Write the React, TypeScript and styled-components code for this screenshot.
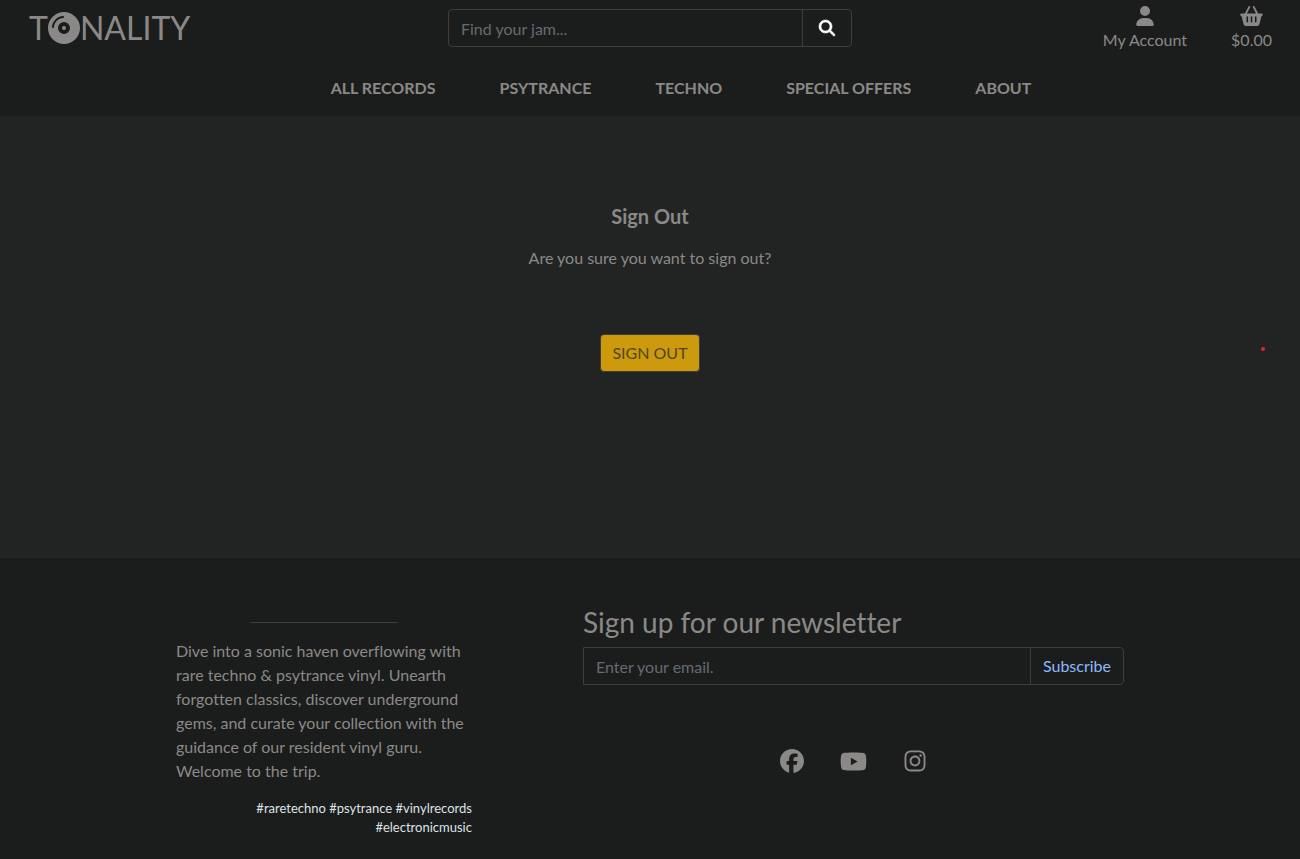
import React from "react";
import styled, { createGlobalStyle } from "styled-components";
import {
  FaCompactDisc,
  FaFacebook,
  FaInstagram,
  FaMagnifyingGlass,
  FaUser,
  FaYoutube,
} from "react-icons/fa6";

const color = {
  bar: "#1b1d1c",
  page: "#222423",
  text: "#8b8987",
  muted: "#656b71",
  line: "#3b3e3d",
  accent: "#cc9a0c",
};

const GlobalStyle = createGlobalStyle`
  *, *::before, *::after { box-sizing: border-box; }
  html, body, #root { height: 100%; }
  body {
    margin: 0;
    background: ${color.bar};
    color: ${color.text};
    font: 400 16px/24px Lato, sans-serif;
    font-variant-ligatures: none;
  }
  h1, h2, p, ul { margin: 0; padding: 0; font-weight: 400; }
  a { color: inherit; text-decoration: none; }
  svg { display: block; overflow: visible; }
`;

const Page = styled.div`
  display: flex;
  flex-direction: column;
  min-height: 100%;
`;

const Header = styled.header`
  background: ${color.bar};
`;

const TopRow = styled.div`
  display: grid;
  grid-template-columns: repeat(3, minmax(0, 1fr));
  gap: 24px;
  padding: 4px 20px 0;
`;

const Logo = styled.a`
  display: flex;
  align-items: center;
  justify-self: start;
  height: 48px;
  padding-left: 9px;
  font-size: 32px;
  line-height: 48px;
`;

const InputGroup = styled.form<{ $square?: boolean }>`
  display: flex;
  height: 38px;
  border: 1px solid ${color.line};
  border-radius: ${(p) => (p.$square ? "0 4px 4px 0" : "4px")};
`;

const SearchGroup = styled(InputGroup)`
  margin-top: 5px;
`;

const TextInput = styled.input`
  flex: 1;
  min-width: 0;
  padding: 2px 12px 0;
  border: 0;
  background: transparent;
  color: ${color.text};
  font: inherit;
  &::placeholder { color: ${color.muted}; opacity: 1; }
`;

const GroupButton = styled.button<{ $tone: string; $pad: number }>`
  display: flex;
  align-items: center;
  padding: 0 ${(p) => p.$pad}px;
  border: 0;
  border-left: 1px solid ${color.line};
  background: transparent;
  color: ${(p) => p.$tone};
  font: inherit;
`;

const UserLinks = styled.ul`
  display: flex;
  justify-content: flex-end;
  gap: 44px;
  padding-right: 8px;
  list-style: none;
`;

const UserLink = styled.a`
  display: flex;
  flex-direction: column;
  align-items: center;
  gap: 2px;
  padding-top: 2px;
`;

const Nav = styled.nav`
  padding: 24px 0 16px 62px;
`;

const NavList = styled.ul`
  display: flex;
  justify-content: center;
  gap: 64px;
  list-style: none;
`;

const NavLink = styled.a`
  font-weight: 700;
  text-transform: uppercase;
`;

const Main = styled.main`
  position: relative;
  display: flex;
  flex-direction: column;
  align-items: center;
  padding: 88px 24px 186px;
  background: ${color.page};
`;

const Title = styled.h1`
  margin-bottom: 18px;
  font-size: 20px;
  font-weight: 700;
  line-height: 24px;
`;

const SignOutButton = styled.button`
  height: 38px;
  margin-top: 64px;
  padding: 0 11px;
  border: 1px solid ${color.line};
  border-radius: 4px;
  background: ${color.accent};
  color: #50461c;
  font: inherit;
  text-transform: uppercase;
`;

const Marker = styled.span`
  position: absolute;
  top: 231px;
  right: 35px;
  width: 4px;
  height: 4px;
  border-radius: 50%;
  background: #e02420;
`;

const Footer = styled.footer`
  flex: 1;
  padding: 40px 24px 22px;
  background: ${color.bar};
`;

const FooterGrid = styled.div`
  display: grid;
  grid-template-columns: minmax(0, 35fr) minmax(0, 64fr);
  gap: 111px;
  max-width: 948px;
  margin: 0 auto;
`;

const Rule = styled.hr`
  width: 50%;
  margin: 24px auto 16px;
  border: 0;
  border-top: 1px solid ${color.line};
`;

const Tags = styled.p`
  margin-top: 16px;
  color: #dee2e6;
  font-size: 13px;
  line-height: 19px;
  text-align: right;
`;

const NewsTitle = styled.h2`
  padding: 8px 0;
  font-size: 28px;
  line-height: 33px;
`;

const Socials = styled.ul`
  display: flex;
  justify-content: center;
  align-items: center;
  gap: 36px;
  height: 24px;
  margin-top: 64px;
  list-style: none;
`;

const navItems = ["All records", "Psytrance", "Techno", "Special offers", "About"];

const socials = [
  { name: "Facebook", Icon: FaFacebook, size: 24 },
  { name: "YouTube", Icon: FaYoutube, size: 27 },
  { name: "Instagram", Icon: FaInstagram, size: 24 },
];

const stay = (e: React.FormEvent) => e.preventDefault();

function BasketIcon() {
  return (
    <svg width="23" height="20" viewBox="0 0 576 512" fill="currentColor" aria-hidden="true">
      <path
        fillRule="evenodd"
        d="M253 35c6-12 2-26-10-32s-26-2-32 10L118 192H32a32 32 0 0 0 0 64l52 207c7 29 33 49 62 49h284c29 0 55-20 62-49l52-207a32 32 0 0 0 0-64h-86L365 13c-6-12-20-16-32-10s-16 20-10 32l81 157H172ZM160 280a20 20 0 0 1 40 0v120a20 20 0 0 1-40 0ZM268 280a20 20 0 0 1 40 0v120a20 20 0 0 1-40 0ZM376 280a20 20 0 0 1 40 0v120a20 20 0 0 1-40 0Z"
      />
    </svg>
  );
}

export default function App() {
  return (
    <>
      <GlobalStyle />
      <Page>
        <Header>
          <TopRow>
            <Logo href="#" aria-label="Tonality">
              T<FaCompactDisc size={32} />NALITY
            </Logo>
            <SearchGroup role="search" onSubmit={stay}>
              <TextInput type="search" placeholder="Find your jam..." aria-label="Search records" />
              <GroupButton $tone="#fff" $pad={16} aria-label="Search">
                <FaMagnifyingGlass size={16} strokeWidth={20} />
              </GroupButton>
            </SearchGroup>
            <UserLinks>
              <li>
                <UserLink href="#">
                  <FaUser size={20} />
                  My Account
                </UserLink>
              </li>
              <li>
                <UserLink href="#">
                  <BasketIcon />
                  $0.00
                </UserLink>
              </li>
            </UserLinks>
          </TopRow>
          <Nav>
            <NavList>
              {navItems.map((item) => (
                <li key={item}>
                  <NavLink href="#">{item}</NavLink>
                </li>
              ))}
            </NavList>
          </Nav>
        </Header>

        <Main>
          <Title>Sign Out</Title>
          <p>Are you sure you want to sign out?</p>
          <SignOutButton type="button">Sign out</SignOutButton>
          <Marker />
        </Main>

        <Footer>
          <FooterGrid>
            <div>
              <Rule />
              <p>
                Dive into a sonic haven overflowing with rare techno &amp; psytrance vinyl. Unearth
                forgotten classics, discover underground gems, and curate your collection with the
                guidance of our resident vinyl guru. Welcome to the trip.
              </p>
              <Tags>#raretechno #psytrance #vinylrecords #electronicmusic</Tags>
            </div>
            <div>
              <NewsTitle>Sign up for our newsletter</NewsTitle>
              <InputGroup $square onSubmit={stay}>
                <TextInput type="email" placeholder="Enter your email." aria-label="Email address" />
                <GroupButton $tone="#8bb9fe" $pad={12}>
                  Subscribe
                </GroupButton>
              </InputGroup>
              <Socials>
                {socials.map(({ name, Icon, size }) => (
                  <li key={name}>
                    <a href="#" aria-label={name}>
                      <Icon size={size} />
                    </a>
                  </li>
                ))}
              </Socials>
            </div>
          </FooterGrid>
        </Footer>
      </Page>
    </>
  );
}
